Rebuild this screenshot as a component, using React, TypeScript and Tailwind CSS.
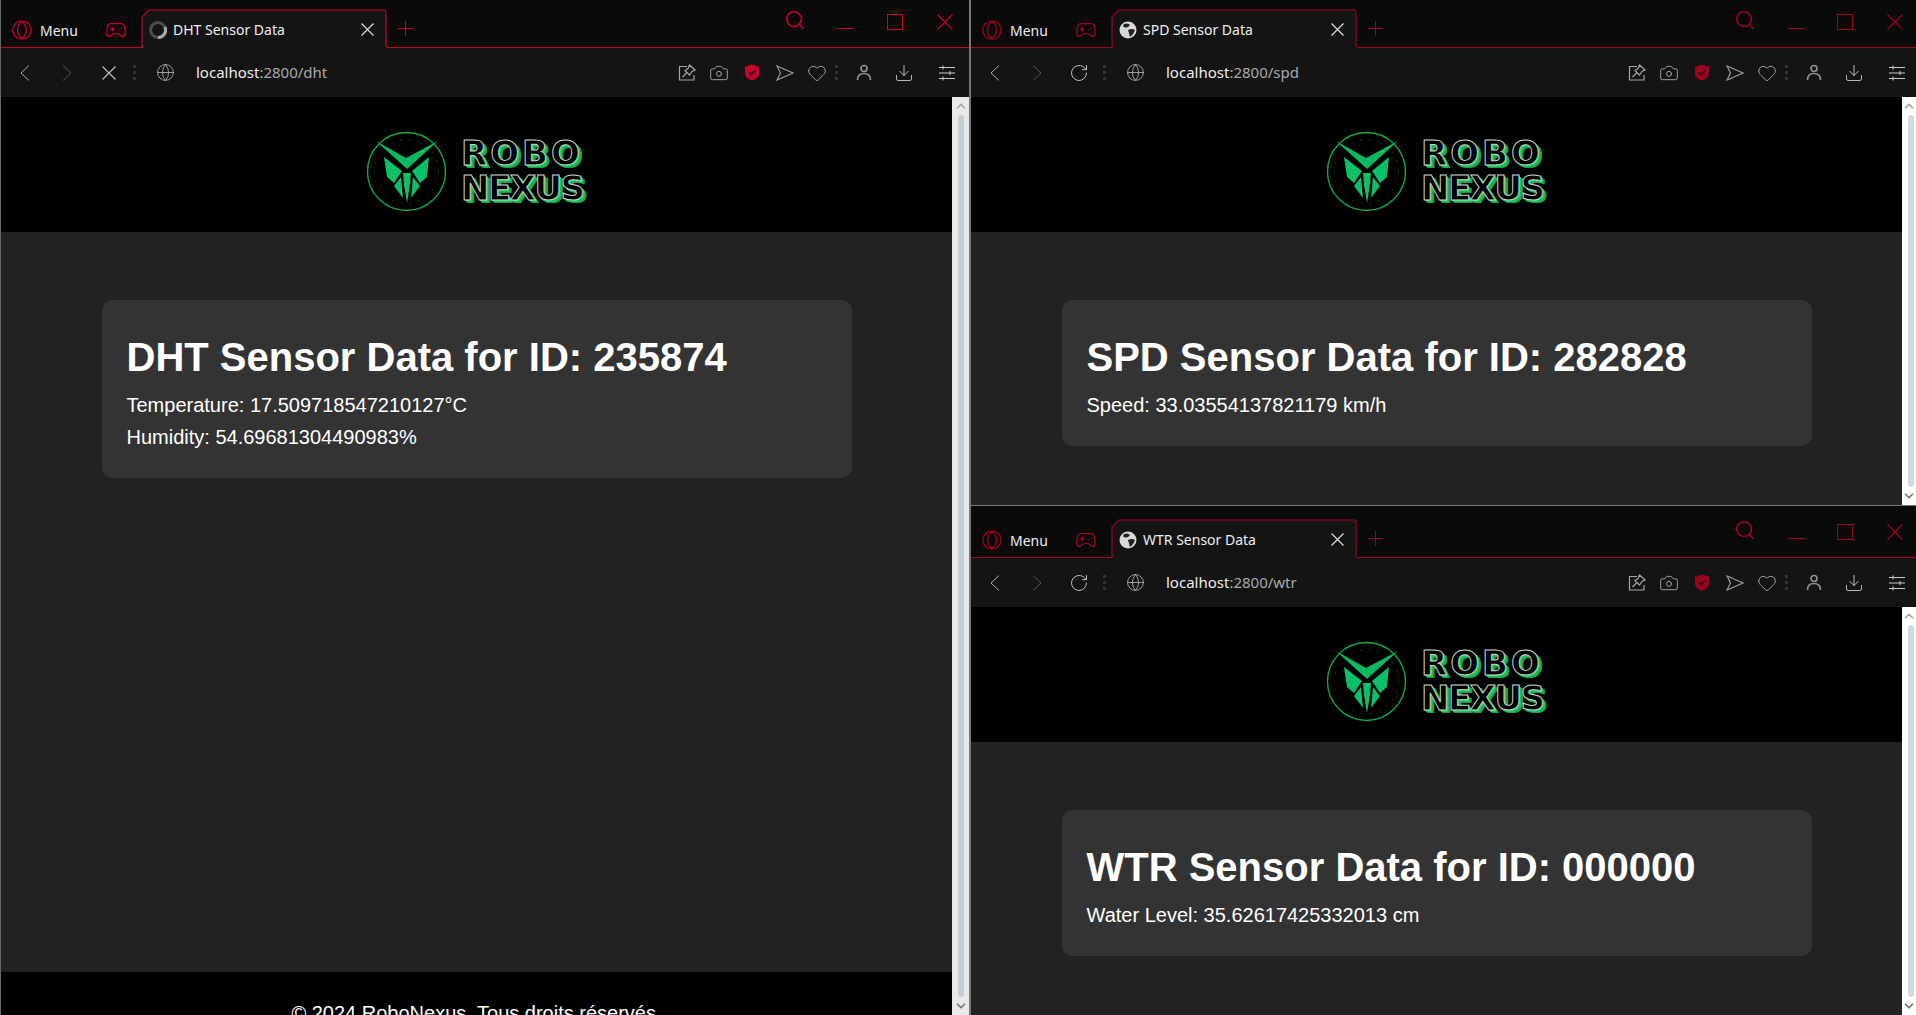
import React from 'react';
import { ChevronUp, ChevronDown, RotateCw, Globe, Camera, Heart, Search, Download, Gamepad2 } from 'lucide-react';

const UI_FONT = 'font-["Noto_Sans","Open_Sans",sans-serif]';

const Logo: React.FC = () => (
  <div className="flex items-center gap-[14px] mt-[33px] w-[221px] h-[82px]">
    <svg width="81" height="81" viewBox="0 0 81 81" className="shrink-0">
      <circle cx="40.5" cy="40.5" r="39" fill="#000" stroke="#0ea84f" strokeWidth="1.4" />
      <circle cx="40.5" cy="40.5" r="32" fill="none" stroke="#0b5f30" strokeWidth="0.7" strokeDasharray="2 7" />
      <path d="M10 10 L40 27 L72 10 L41 38 Z" fill="#0db862" />
      <path d="M18 26 L36 40 L28 52 L21 46 Z M63 26 L46 40 L54 52 L61 46 Z" fill="#0cc06a" />
      <path d="M37 42 L45 42 L44 54 L41 72 L38 54 Z M28 55 L35 46 L37 67 Z M54 55 L47 46 L45 67 Z" fill="#0cc06a" />
    </svg>
    <div className={'flex flex-col font-["DejaVu_Sans",sans-serif] font-bold text-[34px] leading-[35px] text-black [-webkit-text-stroke:1px_#c4d4c8] [text-shadow:1px_1px_0_#1fc45e,2px_2px_0_#1fc45e,3px_3px_0_#16a34a,4px_3px_0_#16a34a]'}>
      <span className="tracking-[3px]">ROBO</span>
      <span className="tracking-[-1.5px]">NEXUS</span>
    </div>
  </div>
);

const Favicon: React.FC<{ loading?: boolean }> = ({ loading }) =>
  loading ? (
    <svg width="18" height="18" viewBox="0 0 18 18" className="shrink-0">
      <circle cx="9" cy="9" r="7.4" fill="none" stroke="#4d4d4d" strokeWidth="3" />
      <path d="M9 16.4 A7.4 7.4 0 0 0 16 6" fill="none" stroke="#a8a8a8" strokeWidth="3" />
    </svg>
  ) : (
    <svg width="18" height="18" viewBox="0 0 18 18" className="shrink-0">
      <circle cx="9" cy="9" r="8.5" fill="#d8d8d8" />
      <path d="M5 3 Q9 1.5 11 4 Q9 7 6 6.5 Q3 6 5 3 Z M9 9 Q13 7 16 9 Q15 13 11 16 Q10 12 9 9 Z" fill="#222" />
    </svg>
  );

const OperaIcon: React.FC<{ color: string }> = ({ color }) => (
  <svg width="20" height="20" viewBox="0 0 20 20" className="shrink-0" fill="none" stroke={color} strokeWidth="1.3">
    <circle cx="10" cy="10" r="9.2" />
    <ellipse cx="10" cy="10" rx="4.4" ry="7.6" />
  </svg>
);

const Cross: React.FC<{ size: number; color: string; width?: number }> = ({ size, color, width = 1.2 }) => (
  <svg width={size} height={size} viewBox={`0 0 ${size} ${size}`} className="shrink-0" fill="none" stroke={color} strokeWidth={width}>
    <path d={`M0.5 0.5 L${size - 0.5} ${size - 0.5} M${size - 0.5} 0.5 L0.5 ${size - 0.5}`} />
  </svg>
);

const PlusMark: React.FC<{ color: string }> = ({ color }) => (
  <svg width="15" height="15" viewBox="0 0 15 15" className="shrink-0" fill="none" stroke={color} strokeWidth="1">
    <path d="M7.5 0 V15 M0 7.5 H15" />
  </svg>
);

const Chevron: React.FC<{ color: string; right?: boolean }> = ({ color, right }) => (
  <svg width="10" height="16" viewBox="0 0 10 16" className="shrink-0" fill="none" stroke={color} strokeWidth="1">
    <path d={right ? 'M1 0.5 L9 8 L1 15.5' : 'M9 0.5 L1 8 L9 15.5'} />
  </svg>
);

const PinIcon: React.FC = () => (
  <svg width="18" height="18" viewBox="0 0 18 18" className="shrink-0" fill="none" stroke="#a5a5a5" strokeWidth="1.2">
    <path d="M9 2.5 H1.5 V16 H16 V11" />
    <path d="M11.5 1 L17 6 L14 7.5 L11.5 11 L7 6.5 L10 4.5 Z M8.5 9 L4.5 13" />
  </svg>
);

const ShieldIcon: React.FC<{ color: string }> = ({ color }) => (
  <svg width="16" height="17" viewBox="0 0 16 17" className="shrink-0">
    <path d="M8 0.5 L15 2.8 V10 Q15 14 8 16.8 Q1 14 1 10 V2.8 Z" fill={color} />
    <path d="M4.8 8.4 L7.2 10.6 L11.4 6.4" fill="none" stroke="#1a1a1a" strokeWidth="1.5" />
  </svg>
);

const SendIcon: React.FC = () => (
  <svg width="18" height="16" viewBox="0 0 18 16" className="shrink-0" fill="none" stroke="#999" strokeWidth="1.2">
    <path d="M1 1 L17 8 L1 15 L4.5 8 Z" />
  </svg>
);

const UserIcon: React.FC = () => (
  <svg width="16" height="17" viewBox="0 0 16 17" className="shrink-0" fill="none" stroke="#8f8f8f" strokeWidth="1.7">
    <circle cx="8" cy="4.5" r="3" />
    <path d="M1.5 16 Q1.5 9.5 8 9.5 Q14.5 9.5 14.5 16" />
  </svg>
);

const SlidersIcon: React.FC = () => (
  <svg width="18" height="16" viewBox="0 0 18 16" className="shrink-0" fill="none" stroke="#ccc" strokeWidth="1">
    <path d="M1 2.5 H17 M1 8 H17 M1 13.5 H17 M5 0.5 V4.5 M12 6 V10 M5 11.5 V15.5" />
  </svg>
);

const Dots: React.FC = () => (
  <div className="flex flex-col gap-[3px] w-[3px] shrink-0">
    <div className="h-[3px] bg-[#333]" />
    <div className="h-[3px] bg-[#333]" />
    <div className="h-[3px] bg-[#333]" />
  </div>
);

const TabOutline: React.FC<{ color: string }> = ({ color }) => (
  <svg width="246" height="39" viewBox="0 0 246 39" fill="none" className="absolute left-0 top-0">
    <path d="M0 39 L2 37 L1 37 V8 L8 1 H244 L245 2 V37 L247 39" fill="#141415" stroke={color} strokeWidth="1.2" />
  </svg>
);

type WindowProps = {
  tag: string;
  sensorId: string;
  path: string;
  lines: string[];
  red: string;
  loading?: boolean;
  footer?: boolean;
  tabBarExtra?: string;
  toolbarRight: string;
  barWidth: string;
  thumbColor: string;
  pageBar: string;
  className: string;
};

const BrowserWindow: React.FC<WindowProps> = ({ tag, sensorId, path, lines, red, loading, footer, tabBarExtra, toolbarRight, barWidth, thumbColor, pageBar, className }) => (
  <div className={`flex flex-col overflow-hidden min-h-0 ${className}`}>
    {/* Tab strip */}
    <div className={`flex items-start bg-[#0a0a0b] shrink-0 ${tabBarExtra}`}>
      <div className={`flex flex-1 h-[48px] items-end relative ${toolbarRight}`}>
        <div className="absolute left-0 right-0 bottom-0 h-px" style={{ backgroundColor: red }} />
        <div className="flex items-center w-[140px] h-[38px] pl-[11px] pt-[2px] shrink-0">
          <OperaIcon color={red} />
          <span className={`ml-[8px] text-[14px] text-[#eee] ${UI_FONT}`}>Menu</span>
          <Gamepad2 size={22} strokeWidth={1.5} color={red} className="ml-[27px]" />
        </div>
        <div className="relative w-[246px] h-[39px] shrink-0 flex items-center pl-[8px] pr-[13px]">
          <TabOutline color={red} />
          <div className="relative flex items-center gap-[6px] flex-1 pt-[2px]">
            <Favicon loading={loading} />
            <span className={`flex-1 text-[14px] text-[#eee] ${UI_FONT}`}>{tag} Sensor Data</span>
            <Cross size={13} color="#ddd" />
          </div>
        </div>
        <div className="ml-[11px] mb-[12px] shrink-0 flex"><PlusMark color={red} /></div>
        <div className="ml-auto mr-[3px] flex items-start self-start">
          <Search size={22} strokeWidth={1.8} color={red} className="mt-[9px]" />
          <div className="w-[16px] h-px ml-[32px] mt-[28px]" style={{ backgroundColor: red }} />
          <div className="w-[16px] h-[16px] border ml-[33px] mt-[14px]" style={{ borderColor: red }} />
          <div className="ml-[34px] mt-[14px] flex"><Cross size={16} color={red} width={1.3} /></div>
        </div>
      </div>
    </div>

    {/* Address bar */}
    <div className={`flex items-center h-[49px] bg-[#141415] shrink-0 pl-[19px] ${toolbarRight}`}>
      <Chevron color="#aaa" />
      <div className="ml-[32px] flex"><Chevron color="#555" right /></div>
      <div className="ml-[30px] w-[14px] flex justify-center">
        {loading ? <Cross size={14} color="#bbb" /> : <RotateCw size={20} strokeWidth={1.2} color="#bbb" className="shrink-0" />}
      </div>
      <div className="ml-[17px]"><Dots /></div>
      <Globe size={19} strokeWidth={1} color="#bbb" className="ml-[20px] shrink-0" />
      <span className={`ml-[21px] text-[15px] text-[#ececec] ${UI_FONT}`}>
        localhost<span className="text-[#a9a9a9]">:2800/{path}</span>
      </span>
      <div className="ml-auto flex items-center">
        <PinIcon />
        <Camera size={20} strokeWidth={1.1} color="#aaa" className="ml-[13px] shrink-0" />
        <div className="ml-[15px] flex"><ShieldIcon color={red} /></div>
        <div className="ml-[16px] flex"><SendIcon /></div>
        <Heart size={20} strokeWidth={1.1} color="#aaa" className="ml-[13px] shrink-0" />
        <div className="ml-[8px]"><Dots /></div>
        <div className="ml-[18px] flex"><UserIcon /></div>
        <Download size={20} strokeWidth={1.1} color="#ccc" className="ml-[22px] shrink-0" />
        <div className="ml-[24px] flex"><SlidersIcon /></div>
      </div>
    </div>

    {/* Page */}
    <div className="flex flex-1 min-h-0">
      <div className="flex flex-col flex-1 min-w-0 bg-[#222] text-white font-['Liberation_Sans',Arial,sans-serif]">
        <div className="flex justify-center h-[135px] bg-black shrink-0">
          <Logo />
        </div>
        <div className="flex-1 min-h-0 flex justify-center pt-[68px] overflow-hidden">
          <div className="w-[750px] self-start bg-[#333] rounded-[10px] p-[25px]">
            <h1 className="text-[40px] font-bold leading-[46px] mt-[9px] mb-[9px]">
              {tag} Sensor Data for ID: {sensorId}
            </h1>
            {lines.map(line => (
              <p key={line} className="text-[20px] leading-[32px]">{line}</p>
            ))}
          </div>
        </div>
        {footer && (
          <div className="h-[43px] shrink-0 bg-black overflow-hidden flex justify-center pt-[30px]">
            <p className="text-[20px] leading-[23px] whitespace-nowrap">© 2024 RoboNexus. Tous droits réservés.</p>
          </div>
        )}
      </div>
      {/* Scrollbar */}
      <div className={`flex flex-col shrink-0 items-end ${barWidth} ${pageBar}`}>
        <div className="flex justify-center w-full h-[18px] items-center">
          <ChevronUp size={14} strokeWidth={3} color="#a8a8a8" />
        </div>
        <div className={`flex-1 w-[6px] mr-[2px] rounded-sm ${thumbColor}`} />
        <div className="flex justify-center w-full h-[18px] items-center">
          <ChevronDown size={14} strokeWidth={3} color="#777" />
        </div>
      </div>
    </div>
  </div>
);

export default function App() {
  return (
    <div className="flex w-[1916px] h-[1015px] overflow-hidden bg-[#0a0a0b]">
      <div className="w-px bg-[#666] shrink-0" />
      <BrowserWindow
        tag="DHT"
        sensorId="235874"
        path="dht"
        loading
        footer
        red="#c4022c"
        lines={['Temperature: 17.509718547210127°C', 'Humidity: 54.69681304490983%']}
        toolbarRight="pr-[13px]"
        barWidth="w-[17px]"
        pageBar="bg-[#e9e9e9]"
        thumbColor="bg-[#c3ced8] mr-[5px]"
        className="w-[968px] shrink-0"
      />
      <div className="w-[2px] bg-[#777] shrink-0" />
      <div className="flex flex-col flex-1 min-w-0">
        <BrowserWindow
          tag="SPD"
          sensorId="282828"
          path="spd"
          red="#9c0320"
          lines={['Speed: 33.03554137821179 km/h']}
          toolbarRight="pr-[10px]"
          barWidth="w-[14px]"
          pageBar="bg-white"
          thumbColor="bg-[#d0dae3]"
          className="h-[505px] shrink-0"
        />
        <div className="h-px bg-[#777] shrink-0" />
        <BrowserWindow
          tag="WTR"
          sensorId="000000"
          path="wtr"
          red="#9c0320"
          lines={['Water Level: 35.62617425332013 cm']}
          tabBarExtra="pt-[4px]"
          toolbarRight="pr-[10px]"
          barWidth="w-[14px]"
          pageBar="bg-white"
          thumbColor="bg-[#d0dae3]"
          className="flex-1"
        />
      </div>
    </div>
  );
}
